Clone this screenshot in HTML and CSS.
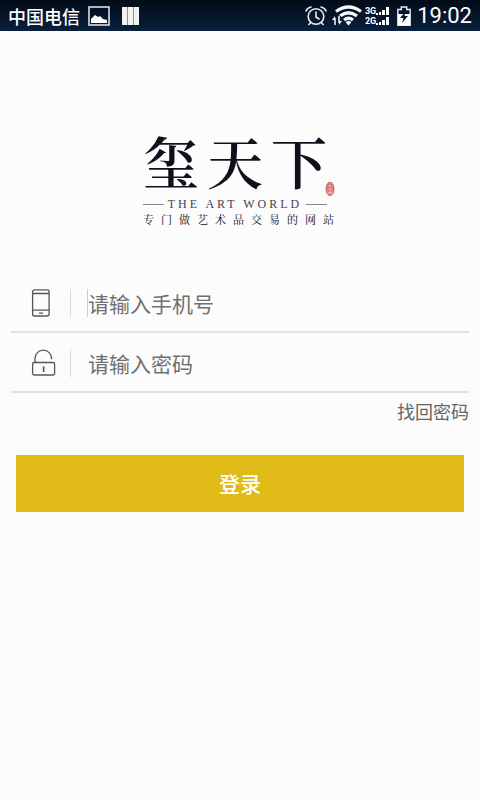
FILE: index.html
```html
<!DOCTYPE html>
<html lang="zh-CN">
<head>
<meta charset="utf-8">
<meta name="viewport" content="width=device-width, initial-scale=1">
<title>玺天下</title>
<link rel="stylesheet" href="styles.css">
</head>
<body>
<header class="status">
  <div class="status-left">
    <span class="carrier">中国电信</span>
    <svg width="22" height="20" viewBox="0 0 22 20" aria-hidden="true"><rect x="1" y="1" width="20" height="18" fill="none" stroke="#e8edf2" stroke-width="1.5"/><path d="M3 17v-4l4-4 3 2 2-1 3 3 4 1v3z" fill="#fff"/></svg>
    <svg class="bars" width="17" height="18" viewBox="0 0 17 18" aria-hidden="true"><path d="M0 0h17v18H0z" fill="#f2f2f0"/><path d="M5.500 0v18M11.500 0v18" stroke="#8b9097"/></svg>
  </div>
  <div class="status-right">
    <svg width="22" height="20" viewBox="0 0 22 20" fill="none" stroke="#e8edf2" stroke-width="1.600" stroke-linecap="round" aria-hidden="true"><circle cx="11" cy="10.500" r="7.800"/><path d="M11 6v5l3 2M1 5q1-3 5-4M21 5q-1-3-5-4M5.500 16.500L4 18.500M16.500 16.500l1.500 2"/></svg>
    <svg class="wifi" width="31" height="21" viewBox="0 0 31 21" aria-hidden="true"><g fill="none" stroke="#f4f6f8" stroke-width="3.200"><path d="M4 6.500Q16.500-2.500 29 6.500"/><path d="M8 11Q16.500 4.500 25 11"/><path d="M12 15Q16.500 11.500 21 15"/></g><path d="M13.500 17q3-2 6 0l-3 3.500z" fill="#fff"/><path d="M3 12v8M7 11v8" stroke="#07172b" stroke-width="4"/><path d="M3 20v-7M7 11v7" stroke="#fff" stroke-width="1.500"/><path d="M0 15l3-4v4zM7 20v-4h3z" fill="#fff"/></svg>
    <div class="networks">
      <div class="network"><span>3G</span><svg width="13" height="8" viewBox="0 0 13 8" aria-hidden="true"><path d="M0 6h2v2H0zM3 5h2v3H3zM6 3h3v5H6zM10 0h3v8h-3z" fill="#fff"/></svg></div>
      <div class="network"><span>2G</span><svg width="13" height="8" viewBox="0 0 13 8" aria-hidden="true"><path d="M0 6h2v2H0zM3 5h2v3H3zM6 3h3v5H6zM10 0h3v8h-3z" fill="#fff"/></svg></div>
    </div>
    <svg class="battery" width="14" height="20" viewBox="0 0 14 20" aria-hidden="true"><path d="M.8 19.200V3.500h3.500V1h5.400v2.500h3.500v15.700z" fill="#07172b" stroke="#e8edf2" stroke-width="1.400"/><path d="M1 8h12v11H1z" fill="#fff"/><path d="M8.500 5.500L3 12h3.500L5 17l6-7H7.500z" fill="#07172b"/></svg>
    <time class="clock">19:02</time>
  </div>
</header>
<main class="page">
  <div class="brand">
    <div class="brand-top">
      <h1 class="name">玺天下</h1>
      <svg class="seal" width="10" height="16" viewBox="0 0 10 16" aria-hidden="true"><ellipse cx="5" cy="8" rx="4.500" ry="7.200" fill="#d66a6e"/><path d="M5 2v4M2.500 6l2-2M7.500 6l-2-2M2 9l3-2 3 2M3 10v3M5 8v6M7 10v3M3 11.500h4" stroke="#f6c9c8" stroke-width=".8" fill="none"/></svg>
    </div>
    <p class="english">THE ART WORLD</p>
    <p class="tagline">专门做艺术品交易的网站</p>
  </div>
  <form class="login">
    <div class="field">
      <label for="phone" aria-label="手机号"><svg width="28" height="28" viewBox="0 0 28 28" fill="none" stroke="#555" stroke-width="1.300" aria-hidden="true"><rect x="3.600" y=".8" width="16.500" height="26.200" rx="2"/><path d="M3.600 4.500h16.500M3.600 21.200h16.500M10 24.200h4"/></svg></label>
      <input id="phone" class="active" type="tel" placeholder="请输入手机号">
    </div>
    <div class="field">
      <label for="password" aria-label="密码"><svg width="28" height="28" viewBox="0 0 28 28" fill="none" stroke="#555" stroke-width="1.300" aria-hidden="true"><rect x="3.600" y="13.500" width="22" height="12.500" rx="1.500"/><path d="M6 13.500V9.500a8.300 8.300 0 0 1 16.600 0v.8"/><path d="M14.600 19v4" stroke-width="1.600"/><circle cx="14.600" cy="18.200" r="1" fill="#555" stroke="none"/></svg></label>
      <input id="password" type="password" placeholder="请输入密码">
    </div>
    <a class="recover" href="#">找回密码</a>
    <button class="submit" type="submit">登录</button>
  </form>
</main>
</body>
</html>
```
FILE: styles.css
```css
* {
  box-sizing: border-box;
}

body {
  margin: 0;
  min-height: 100vh;
  background: #fcfcfc;
  color: #666;
  font-family: "Noto Sans CJK SC", sans-serif;
}

svg {
  display: block;
  flex: none;
}

.status {
  display: flex;
  justify-content: space-between;
  align-items: center;
  height: 31px;
  padding: 0 8px;
  background: linear-gradient(#020b18, #0a203c);
  color: #fff;
}

.status-left,
.status-right {
  display: flex;
  align-items: center;
}

.carrier {
  margin-right: 8px;
  font-size: 18px;
  font-weight: 500;
  line-height: 28px;
}

.bars {
  margin-left: 12px;
}

.wifi {
  margin: 0 2px 0 5px;
}

.networks {
  display: grid;
}

.network {
  display: flex;
  align-items: center;
  font: 700 9px/10px Roboto, sans-serif;
}

.battery {
  margin: 0 6px 0 8px;
}

.clock {
  font: 22px/28px Roboto, sans-serif;
}

.page {
  padding: 96px 11px 24px;
}

.brand {
  width: 194px;
  margin: 0 auto;
  color: #10101c;
}

.brand-top {
  display: flex;
  justify-content: space-between;
  align-items: flex-end;
}

.name {
  width: 182px;
  margin: 0;
  padding-bottom: 4px;
  font-family: "Noto Serif CJK SC", "Noto Sans CJK SC", serif;
  font-size: 56px;
  font-weight: 600;
  line-height: 66px;
  letter-spacing: 8px;
  white-space: nowrap;
}

.seal {
  margin-right: 2px;
}

.english {
  display: flex;
  align-items: center;
  gap: 4px;
  width: 184px;
  margin: 0;
  color: #444;
  font: 12px/14px "Liberation Serif", serif;
  letter-spacing: 3px;
  white-space: nowrap;
}

.english::before,
.english::after {
  content: "";
  flex: 1;
  border-top: 1px solid #888;
}

.tagline {
  margin: 0;
  font-family: "Noto Serif CJK SC", "Noto Sans CJK SC", serif;
  font-size: 11px;
  line-height: 16px;
  padding-bottom: 2px;
  letter-spacing: 7px;
  white-space: nowrap;
}

.login {
  display: flex;
  flex-direction: column;
  margin-top: 44px;
}

.field {
  display: flex;
  align-items: center;
  height: 60px;
  padding: 2px 0 0 18px;
  border-bottom: 2px solid #e2e2e2;
}

.field label {
  padding-right: 13px;
  border-right: 1px solid #d8d8d8;
}

.field input {
  flex: 1;
  min-width: 0;
  height: 28px;
  margin-left: 17px;
  padding: 0;
  border: 0;
  outline: 0;
  background: transparent;
  color: #666;
  font: 21px/28px "Noto Sans CJK SC", sans-serif;
}

.field .active {
  margin-left: 16px;
  border-left: 1px solid #ccc;
}

.field input::placeholder {
  color: #707070;
  opacity: 1;
}

.recover {
  align-self: flex-end;
  margin-top: 4px;
  color: #666;
  font-size: 18px;
  line-height: 28px;
  text-decoration: none;
}

.submit {
  height: 57px;
  margin: 30px 5px 0;
  padding: 0 0 2px;
  border: 0;
  background: #e0bb18;
  color: #fff;
  font: 500 21px/30px "Noto Sans CJK SC", sans-serif;
}
```
